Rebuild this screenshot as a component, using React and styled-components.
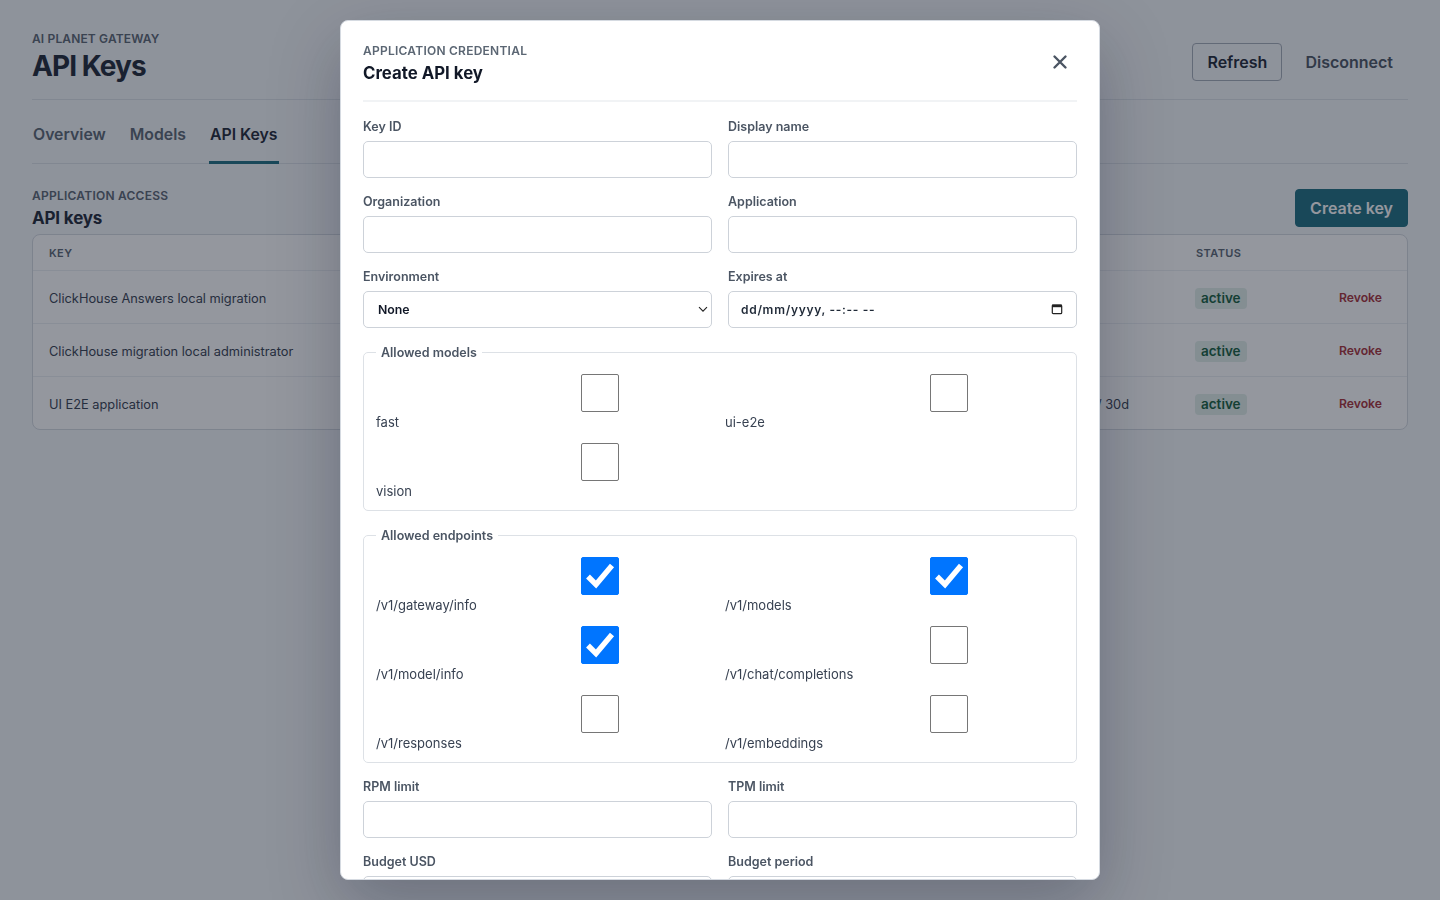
import React from "react";
import styled, { createGlobalStyle } from "styled-components";

const Global = createGlobalStyle`
  html, body { margin: 0; height: 100%; background: #f5f7fa; }
  body { font-family: Inter, "Liberation Sans", sans-serif; color: #1f2937; overflow: hidden; }
  * { box-sizing: border-box; }
`;

const Page = styled.div`
  padding: 31px 32px 24px;
  min-height: 900px;
`;
const Header = styled.header`
  display: flex;
  justify-content: space-between;
  align-items: flex-start;
  height: 69px;
  border-bottom: 1px solid #dde2e8;
`;
const Eyebrow = styled.div`
  font-size: 12px;
  line-height: 15px;
  font-weight: 600;
  letter-spacing: 0.02em;
  text-transform: uppercase;
  color: #5b6673;
`;
const PageEyebrow = styled(Eyebrow)`
  letter-spacing: 0.012em;
`;
const PageTitle = styled.h1`
  margin: 4px 0 0;
  font-size: 28px;
  line-height: 32px;
  font-weight: 700;
  letter-spacing: -0.034em;
  color: #1f2937;
`;
const Actions = styled.div`
  display: flex;
  align-items: center;
  gap: 8px;
  margin-top: 12px;
`;
const Button = styled.button`
  height: 38px;
  padding: 0 14px;
  border-radius: 4px;
  border: 1px solid ${(p) => (p.$kind === "outline" ? "#a5adb8" : p.$kind === "primary" ? "#1f6f82" : "transparent")};
  background: ${(p) => (p.$kind === "primary" ? "#1f6f82" : "transparent")};
  color: ${(p) => (p.$kind === "primary" ? "#ffffff" : p.$kind === "outline" ? "#1f2937" : "#4b5563")};
  font: 600 16px Inter, sans-serif;
`;
const Tabs = styled.nav`
  display: flex;
  gap: 22px;
  height: 64px;
  border-bottom: 1px solid #dde2e8;
`;
const Tab = styled.div`
  display: flex;
  align-items: center;
  padding: 8px 1px 0;
  margin-bottom: -1px;
  font-size: 15.8px;
  font-weight: 600;
  color: ${(p) => (p.$active ? "#1f2937" : "#5b6673")};
  border-bottom: 3px solid ${(p) => (p.$active ? "#1f6f82" : "transparent")};
`;
const SectionHead = styled.div`
  display: flex;
  justify-content: space-between;
  align-items: flex-end;
  margin-top: 25px;
  height: 38px;
`;
const SectionText = styled.div`
  margin-bottom: -3px;
`;
const SectionTitle = styled.h2`
  margin: 4px 0 1px;
  font-size: 17px;
  line-height: 22px;
  font-weight: 700;
  letter-spacing: -0.01em;
  color: #1f2937;
`;
const Table = styled.div`
  margin-top: 7px;
  background: #ffffff;
  border: 1px solid #d5dae1;
  border-radius: 8px;
  overflow: hidden;
`;
const Row = styled.div`
  display: grid;
  grid-template-columns: 1fr 140px 227px;
  align-items: center;
  height: ${(p) => (p.$head ? "35px" : "53px")};
  padding: ${(p) => (p.$head ? "0" : "2px")} 0 0 16px;
  border-top: ${(p) => (p.$head ? "0" : "1px solid #eceff3")};
`;
const HeadCell = styled.div`
  font-size: 11px;
  font-weight: 600;
  letter-spacing: 0.035em;
  text-transform: uppercase;
  color: #5b6673;
  padding-left: ${(p) => (p.$status ? "16px" : "0")};
`;
const Cell = styled.div`
  font-size: 12.8px;
  color: #374151;
`;
const BudgetCell = styled(Cell)`
  text-align: right;
  padding-right: 51px;
`;
const StatusCell = styled.div`
  display: flex;
  align-items: center;
  justify-content: space-between;
  padding: 0 25px 0 15px;
`;
const Badge = styled.span`
  padding: 2px 6px;
  border-radius: 4px;
  background: #e2efe9;
  color: #17603f;
  font-size: 13.5px;
  line-height: 17px;
  font-weight: 600;
`;
const Revoke = styled.span`
  margin-top: -2px;
  font-size: 12.2px;
  font-weight: 600;
  color: #a8323a;
`;

const Overlay = styled.div`
  position: fixed;
  inset: 0;
  display: flex;
  align-items: center;
  justify-content: center;
  padding: 20px;
  background: rgba(17, 24, 39, 0.45);
`;
const Modal = styled.div`
  width: 760px;
  height: 860px;
  padding: 22px 22px;
  background: #ffffff;
  border: 1px solid #d5dae1;
  border-radius: 8px;
  box-shadow: 0 24px 70px rgba(15, 23, 42, 0.28);
  overflow: hidden;
`;
const ModalHead = styled.div`
  display: flex;
  justify-content: space-between;
  align-items: flex-start;
  height: 59px;
  border-bottom: 2px solid #f1f3f5;
`;
const ModalTitle = styled.h2`
  margin: 4px 0 0;
  font-size: 16.8px;
  line-height: 22px;
  font-weight: 700;
  color: #111827;
`;
const Close = styled.button`
  display: flex;
  padding: 0;
  margin: 11px 9px 0 0;
  border: 0;
  background: none;
  color: #4b5563;
`;
const Form = styled.div`
  display: grid;
  grid-template-columns: 1fr 1fr;
  gap: 16.5px 16px;
  margin-top: 17.5px;
`;
const Field = styled.label`
  display: flex;
  flex-direction: column;
  gap: 7px;
  min-width: 0;
`;
const FieldLabel = styled.span`
  font-size: 12.5px;
  line-height: 14px;
  font-weight: 600;
  color: #4b5563;
`;
const Input = styled.input`
  width: 100%;
  height: 37.5px;
  padding: 0 12px;
  border: 1px solid #cdd2d9;
  border-radius: 5px;
  background: #ffffff;
  font: 600 12px Inter, sans-serif;
  letter-spacing: 0.7px;
  color: #1f2937;
  outline: 0;
`;
const ControlWrap = styled.div`
  position: relative;
`;
const Select = styled.select`
  display: block;
  width: 100%;
  height: 37.5px;
  padding: 0 14px;
  appearance: none;
  border: 1px solid #cdd2d9;
  border-radius: 5px;
  background: #ffffff;
  font: 600 12.3px Inter, sans-serif;
  color: #111827;
`;
const ControlIcon = styled.svg`
  position: absolute;
  right: ${(p) => p.$right}px;
  top: 50%;
  transform: translateY(-50%);
  pointer-events: none;
`;
const Group = styled.fieldset`
  grid-column: 1 / -1;
  margin: 0;
  padding: 13.5px 12px 8px;
  min-width: 0;
  border: 1px solid #dde1e6;
  border-radius: 5px;
`;
const GroupLegend = styled.legend`
  padding: 0 5px;
  font-size: 12.5px;
  line-height: 16px;
  font-weight: 600;
  color: #4b5563;
`;
const Checks = styled.div`
  display: grid;
  grid-template-columns: 1fr 1fr;
  gap: 10px;
`;
const Check = styled.label`
  display: grid;
  grid-template-columns: 205px 38px;
  height: 59px;
  font-size: 13px;
  color: #374151;
`;
const CheckText = styled.span`
  align-self: end;
  line-height: 20px;
  padding-bottom: 1px;
`;
const CheckBox = styled.span`
  position: relative;
  width: 38px;
  height: 38px;
`;
const CheckInput = styled.input`
  display: block;
  width: 38px;
  height: 38px;
  margin: 0;
  appearance: none;
  border: 1px solid #767676;
  border-radius: 2px;
  background: #ffffff;
  &:checked {
    background: #0075ff;
    border-color: #0075ff;
  }
`;
const Tick = styled.svg`
  position: absolute;
  inset: 0;
  pointer-events: none;
`;

const keys = [
  { name: "ClickHouse Answers local migration", budget: "" },
  { name: "ClickHouse migration local administrator", budget: "" },
  { name: "UI E2E application", budget: "$5 / 30d" },
];
const models = [
  ["fast", false],
  ["ui-e2e", false],
  ["vision", false],
];
const endpoints = [
  ["/v1/gateway/info", true],
  ["/v1/models", true],
  ["/v1/model/info", true],
  ["/v1/chat/completions", false],
  ["/v1/responses", false],
  ["/v1/embeddings", false],
];

function CheckItem({ label, checked }) {
  return (
    <Check>
      <CheckText>{label}</CheckText>
      <CheckBox>
        <CheckInput type="checkbox" defaultChecked={checked} />
        {checked && (
          <Tick viewBox="0 0 38 38" width="38" height="38">
            <path d="M7 19.5 L15 27.5 L31 8.5" fill="none" stroke="#fff" strokeWidth="5.4" />
          </Tick>
        )}
      </CheckBox>
    </Check>
  );
}

function TextField({ label }) {
  return (
    <Field>
      <FieldLabel>{label}</FieldLabel>
      <Input type="text" />
    </Field>
  );
}

export default function App() {
  return (
    <>
      <Global />
      <Page>
        <Header>
          <div>
            <PageEyebrow>AI Planet Gateway</PageEyebrow>
            <PageTitle>API Keys</PageTitle>
          </div>
          <Actions>
            <Button $kind="outline">Refresh</Button>
            <Button>Disconnect</Button>
          </Actions>
        </Header>
        <Tabs>
          <Tab>Overview</Tab>
          <Tab>Models</Tab>
          <Tab $active>API Keys</Tab>
        </Tabs>
        <SectionHead>
          <SectionText>
            <Eyebrow>Application access</Eyebrow>
            <SectionTitle>API keys</SectionTitle>
          </SectionText>
          <Button $kind="primary">Create key</Button>
        </SectionHead>
        <Table>
          <Row $head>
            <HeadCell>Key</HeadCell>
            <HeadCell />
            <HeadCell $status>Status</HeadCell>
          </Row>
          {keys.map((k) => (
            <Row key={k.name}>
              <Cell>{k.name}</Cell>
              <BudgetCell>{k.budget}</BudgetCell>
              <StatusCell>
                <Badge>active</Badge>
                <Revoke>Revoke</Revoke>
              </StatusCell>
            </Row>
          ))}
        </Table>
      </Page>
      <Overlay>
        <Modal>
          <ModalHead>
            <div>
              <Eyebrow>Application credential</Eyebrow>
              <ModalTitle>Create API key</ModalTitle>
            </div>
            <Close aria-label="Close">
              <svg width="16" height="16" viewBox="0 0 16 16" fill="none" stroke="currentColor" strokeWidth="2.4" strokeLinecap="round">
                <path d="M2.5 2.5 13.5 13.5M13.5 2.5 2.5 13.5" />
              </svg>
            </Close>
          </ModalHead>
          <Form>
            <TextField label="Key ID" />
            <TextField label="Display name" />
            <TextField label="Organization" />
            <TextField label="Application" />
            <Field>
              <FieldLabel>Environment</FieldLabel>
              <ControlWrap>
                <Select defaultValue="None">
                  <option>None</option>
                </Select>
                <ControlIcon $right={3} width="12" height="12" viewBox="0 0 12 12" fill="none" stroke="#222" strokeWidth="1.1">
                  <path d="M2 4.2 6 8.2 10 4.2" />
                </ControlIcon>
              </ControlWrap>
            </Field>
            <Field>
              <FieldLabel>Expires at</FieldLabel>
              <ControlWrap>
                <Input type="text" readOnly value="dd/mm/yyyy, --:-- --" />
                <ControlIcon $right={14} width="12" height="12" viewBox="0 0 12 12" fill="none">
                  <rect x="1.3" y="2" width="9.4" height="8.7" rx="1" stroke="#222" strokeWidth="1.2" />
                  <rect x="1" y="1.6" width="10" height="2.6" fill="#222" />
                </ControlIcon>
              </ControlWrap>
            </Field>
            <Group>
              <GroupLegend>Allowed models</GroupLegend>
              <Checks>
                {models.map(([l, c]) => (
                  <CheckItem key={l} label={l} checked={c} />
                ))}
              </Checks>
            </Group>
            <Group>
              <GroupLegend>Allowed endpoints</GroupLegend>
              <Checks>
                {endpoints.map(([l, c]) => (
                  <CheckItem key={l} label={l} checked={c} />
                ))}
              </Checks>
            </Group>
            <TextField label="RPM limit" />
            <TextField label="TPM limit" />
            <TextField label="Budget USD" />
            <TextField label="Budget period" />
          </Form>
        </Modal>
      </Overlay>
    </>
  );
}
